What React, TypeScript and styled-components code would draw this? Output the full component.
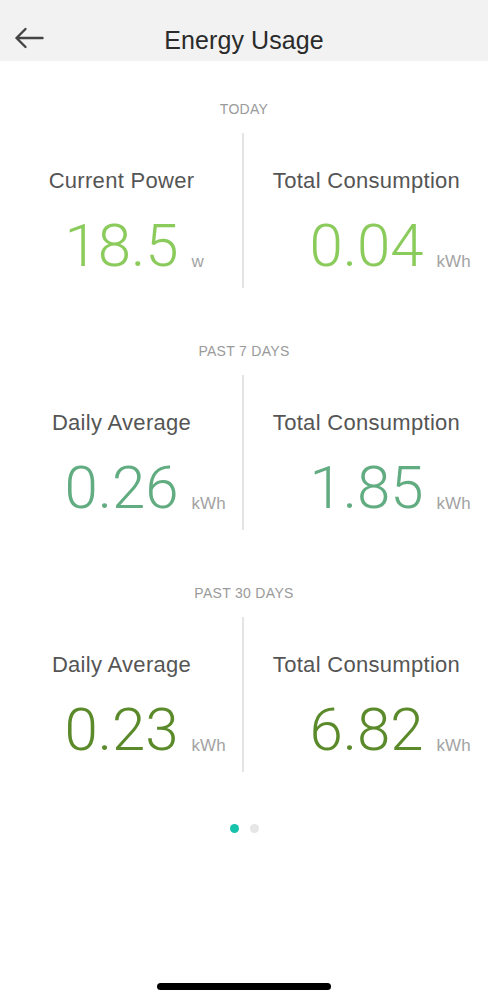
import styled, { createGlobalStyle } from "styled-components";

const GlobalStyle = createGlobalStyle`
  html, body {
    margin: 0;
    padding: 0;
    background: #fff;
  }
  body {
    font-family: "Liberation Sans", Arial, sans-serif;
  }
`;

const Screen = styled.div`
  width: 488px;
  height: 1000px;
  display: flex;
  flex-direction: column;
  background: #fff;
  overflow: hidden;
`;

const TopBar = styled.header`
  height: 61px;
  box-sizing: border-box;
  padding-top: 19px;
  background: #f2f2f2;
  display: grid;
  grid-template-columns: 60px 1fr 60px;
  align-items: center;
`;

const BackButton = styled.button`
  border: 0;
  background: none;
  padding: 0 0 0 14px;
  height: 100%;
  display: flex;
  align-items: center;
  margin-top: -5px;
`;

const Title = styled.h1`
  margin: 0;
  text-align: center;
  font-family: "Liberation Sans", Arial, sans-serif;
  font-size: 25px;
  font-weight: 400;
  color: #2b2b2b;
  letter-spacing: 0.1px;
`;

const Content = styled.main`
  display: flex;
  flex-direction: column;
  padding-top: 40px;
`;

const Section = styled.section`
  height: 242px;
  display: flex;
  flex-direction: column;
`;

const SectionLabel = styled.div`
  text-align: center;
  font-family: "Liberation Sans", Arial, sans-serif;
  font-size: 14px;
  color: #9a9a9a;
  letter-spacing: 0.3px;
  height: 32px;
  line-height: 16px;
`;

const Pair = styled.div`
  display: grid;
  grid-template-columns: 1fr 2px 1fr;
  height: 155px;
`;

const Divider = styled.div`
  background: #e4e4e4;
  width: 2px;
  margin-left: -1px;
`;

const Stat = styled.div`
  display: flex;
  flex-direction: column;
  align-items: center;
  padding-top: 35px;
`;

const StatLabel = styled.div`
  font-family: "Liberation Sans", Arial, sans-serif;
  font-size: 22px;
  color: #555;
  line-height: 26px;
  letter-spacing: 0.3px;
`;

const ValueRow = styled.div`
  position: relative;
  margin-top: 22px;
`;

const Number = styled.span<{ $tone: string }>`
  font-family: Roboto, "Liberation Sans", sans-serif;
  font-weight: 300;
  font-size: 60px;
  line-height: 60px;
  color: ${(p) => p.$tone};
`;

const Unit = styled.span`
  position: absolute;
  left: 100%;
  bottom: 4px;
  margin-left: 13px;
  font-family: "Liberation Sans", Arial, sans-serif;
  font-size: 17px;
  color: #a3a3a3;
  white-space: nowrap;
`;

const Dots = styled.div`
  display: flex;
  justify-content: center;
  gap: 11px;
  margin-top: -3px;
`;

const Dot = styled.span<{ $active?: boolean }>`
  width: 9px;
  height: 9px;
  border-radius: 50%;
  background: ${(p) => (p.$active ? "#17c2ab" : "#e6e6e6")};
`;

const Spacer = styled.div`
  flex: 1;
`;

const HomeBar = styled.div`
  width: 174px;
  height: 7px;
  border-radius: 4px;
  background: #000;
  align-self: center;
  margin-bottom: 10px;
`;

type Reading = { label: string; value: string; unit: string };

const sections: { title: string; tone: string; items: [Reading, Reading] }[] = [
  {
    title: "TODAY",
    tone: "#8bcb5c",
    items: [
      { label: "Current Power", value: "18.5", unit: "w" },
      { label: "Total Consumption", value: "0.04", unit: "kWh" },
    ],
  },
  {
    title: "PAST 7 DAYS",
    tone: "#62ac82",
    items: [
      { label: "Daily Average", value: "0.26", unit: "kWh" },
      { label: "Total Consumption", value: "1.85", unit: "kWh" },
    ],
  },
  {
    title: "PAST 30 DAYS",
    tone: "#5b8a2b",
    items: [
      { label: "Daily Average", value: "0.23", unit: "kWh" },
      { label: "Total Consumption", value: "6.82", unit: "kWh" },
    ],
  },
];

const StatBox = ({ item, tone }: { item: Reading; tone: string }) => (
  <Stat>
    <StatLabel>{item.label}</StatLabel>
    <ValueRow>
      <Number $tone={tone}>{item.value}</Number>
      <Unit>{item.unit}</Unit>
    </ValueRow>
  </Stat>
);

const App = () => {
  return (
    <Screen>
      <GlobalStyle />
      <TopBar>
        <BackButton aria-label="Back">
          <svg width="30" height="24" viewBox="0 0 30 24" fill="none">
            <path
              d="M28.5 12H2.5M11.5 3L2.5 12l9 9"
              stroke="#444"
              strokeWidth="2.4"
              strokeLinecap="round"
              strokeLinejoin="round"
            />
          </svg>
        </BackButton>
        <Title>Energy Usage</Title>
        <div />
      </TopBar>
      <Content>
        {sections.map((s) => (
          <Section key={s.title}>
            <SectionLabel>{s.title}</SectionLabel>
            <Pair>
              <StatBox item={s.items[0]} tone={s.tone} />
              <Divider />
              <StatBox item={s.items[1]} tone={s.tone} />
            </Pair>
          </Section>
        ))}
        <Dots>
          <Dot $active />
          <Dot />
        </Dots>
      </Content>
      <Spacer />
      <HomeBar />
    </Screen>
  );
};

export default App;
